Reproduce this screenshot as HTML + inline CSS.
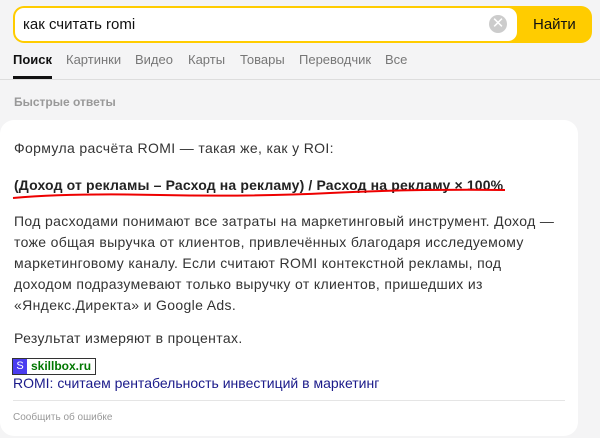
<!DOCTYPE html>
<html><head><meta charset="utf-8"><style>
body{margin:0;width:600px;height:438px;background:#f4f4f5;font-family:"Liberation Sans","Noto Sans CJK JP",sans-serif;position:relative;overflow:hidden;color:#222}
.a{position:absolute;white-space:nowrap}
.box{left:13px;top:6px;width:579px;height:37px;background:#fc0;border-radius:11px}
.inp{left:15px;top:8px;width:502px;height:33px;background:#fff;border-radius:9px}
.tab{top:52px;font-size:13px;color:#777}
.card{left:0;top:120px;width:578px;height:316px;background:#fff;border-radius:14px}
.t{font-size:14px;color:#333;left:14px;letter-spacing:0.35px}
</style></head><body>
<div class="a box"></div><div class="a inp"></div>
<div class="a" style="left:23px;top:16px;font-size:15px;color:#111">как считать romi</div>
<div class="a" style="left:489px;top:15px;width:18px;height:18px;border-radius:50%;background:#ccc;color:#fff;font-size:15px;line-height:18px;text-align:center">✕</div>
<div class="a" style="left:533px;top:16px;font-size:15px;color:#111">Найти</div>
<div class="a tab" style="left:13px;color:#111;font-weight:bold">Поиск</div>
<div class="a tab" style="left:66px">Картинки</div>
<div class="a tab" style="left:135px">Видео</div>
<div class="a tab" style="left:188px">Карты</div>
<div class="a tab" style="left:240px">Товары</div>
<div class="a tab" style="left:299px">Переводчик</div>
<div class="a tab" style="left:385px">Все</div>
<div class="a" style="left:13px;top:76px;width:39px;height:3px;background:#111"></div>
<div class="a" style="left:0;top:79px;width:600px;height:1px;background:#ddd"></div>
<div class="a" style="left:14px;top:95px;font-size:12px;font-weight:bold;color:#999">Быстрые ответы</div>
<div class="a card"></div>
<div class="a t" style="top:140px">Формула расчёта ROMI — такая же, как у ROI:</div>
<div class="a t" style="top:177px;font-weight:bold;color:#222;letter-spacing:0.15px">(Доход от рекламы – Расход на рекламу) / Расход на рекламу × 100%</div>
<svg class="a" style="left:10px;top:188px" width="500" height="14"><path d="M3 10 Q60 5 150 7 T320 5 T495 2" stroke="#e00" stroke-width="2" fill="none"/></svg>
<div class="a t" style="top:211px;line-height:21px">Под расходами понимают все затраты на маркетинговый инструмент. Доход —<br>тоже общая выручка от клиентов, привлечённых благодаря исследуемому<br>маркетинговому каналу. Если считают ROMI контекстной рекламы, под<br>доходом подразумевают только выручку от клиентов, пришедших из<br>«Яндекс.Директа» и Google Ads.</div>
<div class="a t" style="top:330px">Результат измеряют в процентах.</div>
<div class="a" style="left:12px;top:358px;width:82px;height:15px;border:1px solid #333"></div>
<div class="a" style="left:13px;top:359px;width:14px;height:15px;background:#4a3cf0;color:#fff;font-size:11px;text-align:center;line-height:15px">S</div>
<div class="a" style="left:31px;top:359px;font-size:12px;font-weight:bold;color:#070">skillbox.ru</div>
<div class="a" style="left:13px;top:375px;font-size:14px;color:#1a1a8a">ROMI: считаем рентабельность инвестиций в маркетинг</div>
<div class="a" style="left:13px;top:400px;width:552px;height:1px;background:#e5e5e5"></div>
<div class="a" style="left:13px;top:412px;font-size:10px;color:#999">Сообщить об ошибке</div>
</body></html>
